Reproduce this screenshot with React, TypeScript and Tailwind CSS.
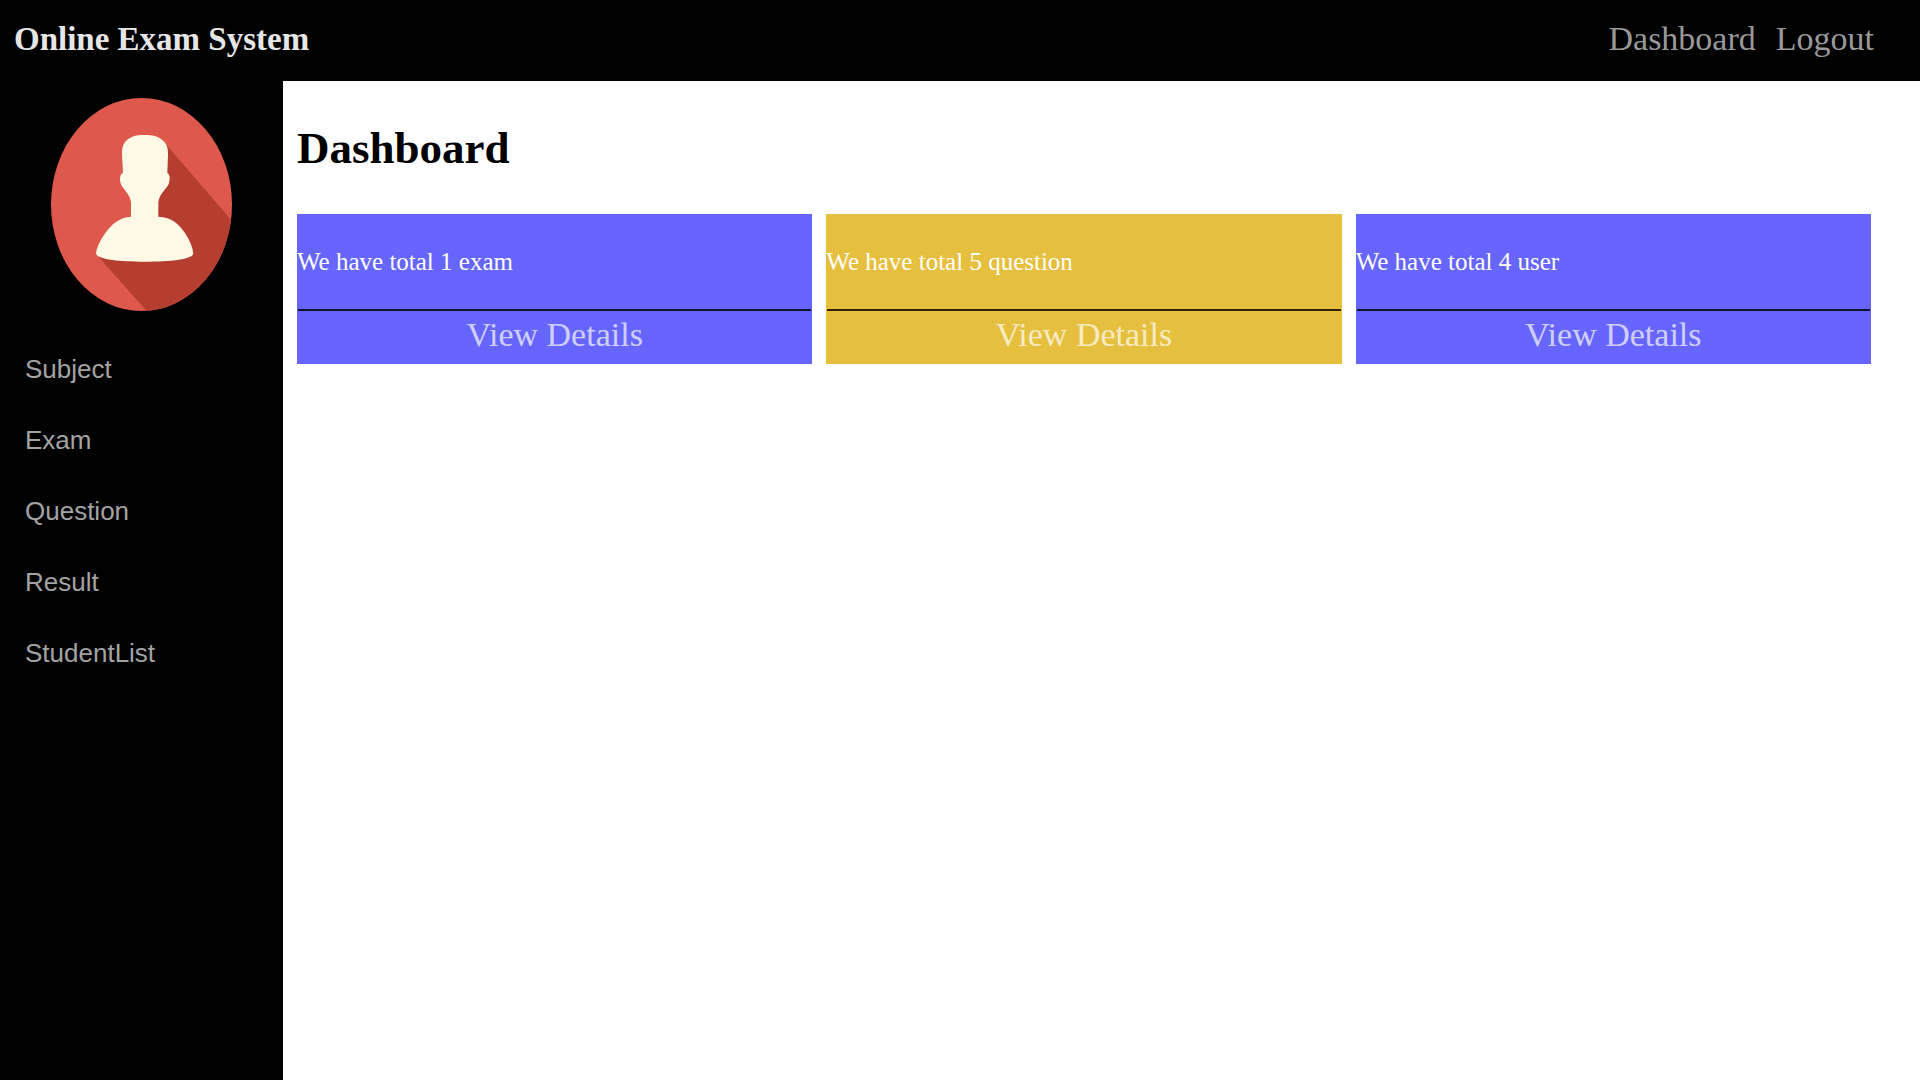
const menu = ["Subject", "Exam", "Question", "Result", "StudentList"];

const cards = [
  { text: "We have total 1 exam", color: "bg-[#6666ff]" },
  { text: "We have total 5 question", color: "bg-[#e6bf3e]" },
  { text: "We have total 4 user", color: "bg-[#6666ff]" },
];

function Avatar() {
  return (
    <svg
      className="mx-auto h-[213px] w-[181px]"
      viewBox="63 53 543 639"
      preserveAspectRatio="none"
      role="img"
      aria-label="User avatar"
    >
      <defs>
        <clipPath id="disc">
          <ellipse cx="334.5" cy="372.5" rx="271.5" ry="319.5" />
        </clipPath>
      </defs>
      <g clipPath="url(#disc)">
        <rect x="63" y="53" width="543" height="639" fill="#df584c" />
        <path d="M408 192L606 422V692H350L206 530L340 400Z" fill="#b63e31" />
      </g>
      <path
        d="M343 164C368 164 384 168 396 178C410 189 414 200 414 222L412 278C419 282 420 290 418 302C417 314 411 320 404 328C394 340 386 352 385 366V409C425 410 448 432 465 458C478 478 488 500 490 520C486 538 420 544 344 544C270 544 203 538 198 520C200 500 212 478 226 458C244 432 268 411 303 409V366C301 350 293 340 284 328C276 318 271 312 270 298C270 288 272 280 279 278L276 222C276 200 280 188 292 178C306 168 318 164 343 164Z"
        fill="#fff9e6"
      />
    </svg>
  );
}

export default function App() {
  return (
    <div className="flex min-h-screen flex-col bg-white font-['Liberation_Serif',serif]">
      <header className="flex h-[81px] items-center justify-between bg-black pr-[46px] pb-1 pl-[14px]">
        <div className="text-[33px] leading-10 font-bold text-[#e6e6e6]">Online Exam System</div>
        <nav className="flex gap-5 text-[34px] leading-10 text-[#999999]">
          <a href="#dashboard">Dashboard</a>
          <a href="#logout">Logout</a>
        </nav>
      </header>
      <div className="flex grow">
        <aside className="w-[283px] shrink-0 bg-black pt-[17px]">
          <Avatar />
          <nav className="mt-[38px] flex flex-col gap-[31px] pl-[25px] font-['Liberation_Sans',sans-serif] text-[26px] leading-10 text-[#a3a3a3]">
            {menu.map((item) => (
              <a key={item} href={`#${item}`}>
                {item}
              </a>
            ))}
          </nav>
        </aside>
        <main className="grow pt-[41px] pr-[49px] pl-[14px]">
          <h1 className="text-[45px] leading-[52px] font-bold text-black">Dashboard</h1>
          <div className="mt-10 grid grid-cols-3 gap-[14px]">
            {cards.map((card) => (
              <section key={card.text} className={card.color}>
                <p className="pt-8 pb-[31px] text-[25px] leading-8 text-white">{card.text}</p>
                <div className="mx-px border-t-2 border-black/80 pt-1 pb-[9px] text-center text-[34px] leading-10 text-white/70">
                  <a href="#details">View Details</a>
                </div>
              </section>
            ))}
          </div>
        </main>
      </div>
    </div>
  );
}
